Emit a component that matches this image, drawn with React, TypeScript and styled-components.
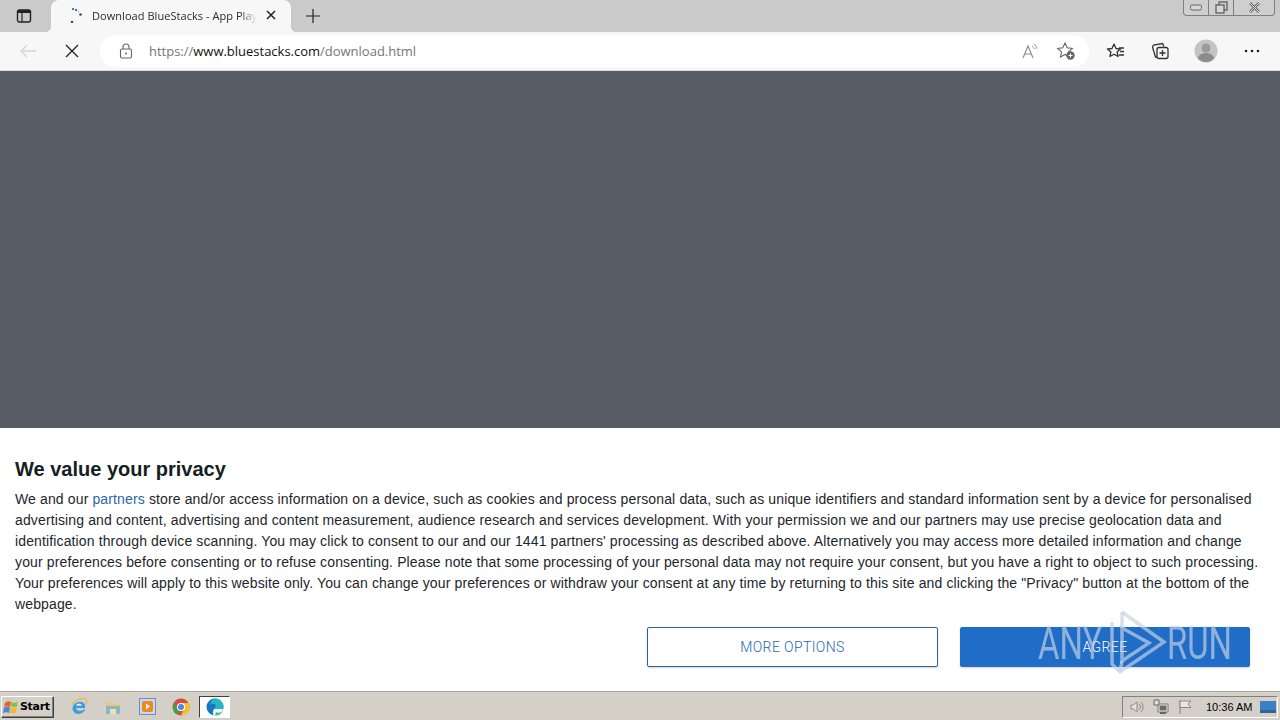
import React from "react";
import styled, { createGlobalStyle } from "styled-components";

const Global = createGlobalStyle`
  html, body { margin: 0; padding: 0; width: 1280px; height: 720px; overflow: hidden; background: #fff; }
  * { box-sizing: border-box; }
`;
const Screen = styled.div`
  position: relative; width: 1280px; height: 720px; display: flex; flex-direction: column;
  font-family: "Liberation Sans", Arial, sans-serif; overflow: hidden;
`;
const TabStrip = styled.div`
  height: 32px; flex: none; background: #cacaca; display: flex; align-items: flex-end; position: relative;
`;
const SideTabs = styled.div`
  width: 51px; height: 32px; display: flex; align-items: center; justify-content: center; padding-right: 3px;
`;
const Tab = styled.div`
  position: relative; width: 240px; height: 32px; background: #f7f7f7; border-radius: 8px 8px 0 0; display: flex; align-items: center;
  padding: 0 0 2px 18px; font-family: "Open Sans", sans-serif; font-size: 11px; color: #2b2b2b;
  &::before, &::after {
    content: ""; position: absolute; bottom: 0; width: 6px; height: 6px;
  }
  &::before { left: -6px; background: radial-gradient(circle at 0 0, transparent 6px, #f7f7f7 6.500px); }
  &::after { right: -6px; background: radial-gradient(circle at 100% 0, transparent 6px, #f7f7f7 6.500px); }
`;
const TabTitle = styled.span`
  margin-left: 9px; width: 165px; white-space: nowrap; overflow: hidden; flex: none; letter-spacing: 0.05px;
  -webkit-mask-image: linear-gradient(90deg, #000 90%, transparent);
  mask-image: linear-gradient(90deg, #000 90%, transparent);
`;
const NewTab = styled.div`
  width: 43px; height: 32px; display: flex; align-items: center; justify-content: center;
`;
const WindowControls = styled.div`
  position: absolute; top: 0; right: 5px; width: 92px; height: 16px; display: flex;
  border: 1px solid #7e7e7e; border-top: 0; border-radius: 0 0 4px 4px; background: #cfcfcf;
`;
const WinBtn = styled.div<{ $w: number; $last?: boolean }>`
  width: ${p => p.$w}px; height: 15px; display: flex; align-items: center; justify-content: center;
  border-right: ${p => (p.$last ? "none" : "1px solid #7e7e7e")};
`;
const Toolbar = styled.div`
  height: 38px; flex: none; background: #f7f7f7; display: flex; align-items: center;
`;
const NavBtn = styled.div<{ $w: number }>`
  width: ${p => p.$w}px; height: 32px; flex: none; display: flex; align-items: center; justify-content: center;
`;
const AddressBar = styled.div`
  margin-left: 12px; width: 989px; height: 32px; border-radius: 16px; background: #fff; display: flex; align-items: center;
  padding: 0 5px 0 19px; flex: none;
`;
const Url = styled.div`
  margin-left: 16px; flex: 1; font-family: "Open Sans", sans-serif; font-size: 13px; color: #767676; white-space: nowrap;
  letter-spacing: -0.01px;
  b { font-weight: 400; color: #111; }
`;
const AddrIcon = styled.div`
  width: 36px; height: 24px; display: flex; align-items: center; justify-content: center;
`;
const Tools = styled.div`
  display: flex; align-items: center; margin-left: 5px;
`;
const ToolBtn = styled.div<{ $w?: number }>`
  width: ${p => p.$w ?? 44}px; height: 32px; display: flex; align-items: center; justify-content: center;
`;
const Divider = styled.div`
  height: 1px; background: #dcdcdc; flex: none;
`;
const Page = styled.div`
  flex: 1; background: #595d66; min-height: 0;
`;
const Banner = styled.div`
  height: 263px; flex: none; background: #fff; padding: 29px 15px 0; display: flex; flex-direction: column;
`;
const Heading = styled.h2`
  margin: 0; font-size: 20px; line-height: 24px; font-weight: 700; color: #141e23;
`;
const Body = styled.p`
  margin: 8px 0 0; font-size: 14px; line-height: 21px; color: #1d262b; letter-spacing: 0.13px; width: 1250px;
  a { color: #2868a8; text-decoration: none; }
`;
const Actions = styled.div`
  display: flex; justify-content: flex-end; gap: 22px; margin-top: 12px; padding-right: 15px;
`;
const Button = styled.button<{ $primary?: boolean }>`
  width: ${p => (p.$primary ? 290 : 291)}px; height: 40px; border-radius: 2px; font-family: Roboto, "Liberation Sans", sans-serif;
  font-size: 14px; font-weight: 300; letter-spacing: 0.4px; cursor: pointer; padding: 0;
  border: 1px solid ${p => (p.$primary ? "#1f6dc6" : "#2a62a8")};
  background: ${p => (p.$primary ? "#1f6dc6" : "#fff")};
  color: ${p => (p.$primary ? "#fff" : "#1f65b8")};
  box-shadow: 0 1px 2px rgba(0,0,0,.18);
`;
const Rule = styled.div`
  height: 2px; flex: none; background: linear-gradient(#8c8a84, #efece4);
`;
const Taskbar = styled.div`
  height: 27px; flex: none; background: #d4d0c8; display: flex; align-items: center; padding-left: 1px;
`;
const Start = styled.div`
  width: 53px; height: 22px; display: flex; align-items: center; padding-left: 1px; background: #d4d0c8;
  border: 1px solid; border-color: #fff #404040 #404040 #fff; box-shadow: inset -1px -1px 0 #808080;
  font-size: 11px; font-weight: 700; color: #000; font-family: "DejaVu Sans", sans-serif; letter-spacing: -0.3px;
`;
const TaskIcons = styled.div`
  display: flex; align-items: center; margin-left: 14px; gap: 12px; height: 24px;
`;
const TaskIcon = styled.div<{ $active?: boolean }>`
  width: ${p => (p.$active ? 31 : 22)}px; height: 22px; display: flex; align-items: center; justify-content: center;
  ${p => p.$active ? "background:#fff; border:1px solid; border-color:#404040 #fff #fff #404040; margin-left:-5px;" : ""}
`;
const Tray = styled.div`
  margin-left: auto; margin-right: 2px; width: 156px; height: 22px; display: flex; align-items: center; padding-left: 2px;
  border: 1px solid; border-color: #808080 #fff #fff #808080;
`;
const TrayIcon = styled.div`
  width: 24px; display: flex; align-items: center; justify-content: center; height: 20px;
`;
const Clock = styled.span`
  font-size: 11px; color: #000; margin-left: 9px; white-space: nowrap; font-family: "Liberation Sans", sans-serif;
`;
const Watermark = styled.div`
  position: absolute; left: 1038px; top: 608px; width: 194px; height: 66px; display: flex; align-items: center;
  justify-content: space-between; color: rgba(196, 210, 228, .68); pointer-events: none;
`;
const WmText = styled.span`
  font-family: Roboto, sans-serif; font-weight: 400; font-size: 47px; line-height: 66px; display: inline-block;
  transform: scaleX(.7); padding-top: 3px;
  &:first-child { transform-origin: left center; }
  &:last-child { transform-origin: right center; }
`;
const WmMark = styled.svg`
  position: absolute; left: 70px; top: -2px;
`;

const stroke = { fill: "none", stroke: "#333", strokeWidth: 1.3 } as const;

export default function App() {
  return (
    <Screen>
      <Global />
      <TabStrip>
        <SideTabs>
          <svg width="16" height="16" viewBox="0 0 16 16"><rect x="1.500" y="2" width="13" height="12" rx="2" fill="none" stroke="#222" strokeWidth="1.400"/><rect x="2" y="2" width="12" height="3" fill="#222"/><path d="M6 5v9" stroke="#222" strokeWidth="1.200"/></svg>
        </SideTabs>
        <Tab>
          <svg width="14" height="16" viewBox="0 0 14 16"><g fill="#1d4f8f"><circle cx="4" cy="2" r="1"/><circle cx="7" cy="3" r="1.100"/><circle cx="11.500" cy="7.500" r="1.300"/><circle cx="3" cy="15" r="1.300"/></g><circle cx="9.500" cy="4.500" r=".8" fill="#8fb4dc"/></svg>
          <TabTitle>Download BlueStacks - App Player</TabTitle>
          <svg width="12" height="12" viewBox="0 0 12 12" style={{ marginLeft: 8 }}><path d="M2 2l8 8M10 2l-8 8" stroke="#222" strokeWidth="1.500"/></svg>
        </Tab>
        <NewTab>
          <svg width="16" height="16" viewBox="0 0 16 16"><path d="M8 1v14M1 8h14" stroke="#222" strokeWidth="1.200"/></svg>
        </NewTab>
        <WindowControls>
          <WinBtn $w={25}><svg width="12" height="7" viewBox="0 0 12 7"><rect x=".5" y="1" width="11" height="5" rx="1.500" fill="#d8d8d8" stroke="#666"/></svg></WinBtn>
          <WinBtn $w={25}><svg width="13" height="13" viewBox="0 0 13 13"><rect x="4" y="1" width="8" height="8" fill="none" stroke="#666" strokeWidth="1.400"/><rect x="1" y="4" width="8" height="8" fill="#d8d8d8" stroke="#666" strokeWidth="1.400"/></svg></WinBtn>
          <WinBtn $w={40} $last><svg width="13" height="11" viewBox="0 0 13 11"><path d="M2 1l9 9M11 1l-9 9" stroke="#666" strokeWidth="2.600"/><path d="M2 1l9 9M11 1l-9 9" stroke="#e4e4e4" strokeWidth="1"/></svg></WinBtn>
        </WindowControls>
      </TabStrip>
      <Toolbar>
        <NavBtn $w={56}>
          <svg width="18" height="14" viewBox="0 0 18 14"><path d="M17 7H2M8 1L2 7l6 6" fill="none" stroke="#d4d4d4" strokeWidth="1.300"/></svg>
        </NavBtn>
        <NavBtn $w={32}>
          <svg width="14" height="14" viewBox="0 0 14 14"><path d="M1 1l12 12M13 1L1 13" stroke="#222" strokeWidth="1.300"/></svg>
        </NavBtn>
        <AddressBar>
          <svg width="14" height="16" viewBox="0 0 14 16"><rect x="1.500" y="6" width="11" height="9" rx="1.500" fill="none" stroke="#666" strokeWidth="1.100"/><path d="M4 6V4a3 3 0 0 1 6 0v2" fill="none" stroke="#666" strokeWidth="1.100"/><circle cx="7" cy="10.500" r="1" fill="#666"/></svg>
          <Url>https://<b>www.bluestacks.com</b>/download.html</Url>
          <AddrIcon>
            <svg width="18" height="18" viewBox="0 0 18 18"><path d="M2 16L7 4l5 12M3.800 12h6.400" fill="none" stroke="#8a8a8a" strokeWidth="1.100"/><path d="M11 4a4 4 0 0 1 2.500 3M12.500 1.800a6.500 6.500 0 0 1 3.500 5" fill="none" stroke="#999" strokeWidth="1"/></svg>
          </AddrIcon>
          <AddrIcon>
            <svg width="20" height="20" viewBox="0 0 20 20"><path d="M9 2l2.200 4.800 5.200.6-3.900 3.500 1 5.100L9 13.500l-4.500 2.500 1-5.100L1.600 7.400l5.200-.6z" fill="none" stroke="#666" strokeWidth="1.100"/><circle cx="14.500" cy="14.500" r="4.200" fill="#666"/><path d="M14.500 12.500v4M12.500 14.500h4" stroke="#fff" strokeWidth="1"/></svg>
          </AddrIcon>
        </AddressBar>
        <Tools>
          <ToolBtn>
            <svg width="20" height="18" viewBox="0 0 20 18"><path d="M8 2l2 4.500 4.500.5-3.400 3 1 4.500L8 12.200 3.900 14.500l1-4.500L1.500 7 6 6.500z" {...stroke} strokeLinejoin="round"/><path d="M13 6h5M14 9.500h4M13 13h5" {...stroke}/></svg>
          </ToolBtn>
          <ToolBtn>
            <svg width="18" height="18" viewBox="0 0 18 18"><path d="M6 15H4.500L1.500 5l1-2 9-1.500 1.500 3" {...stroke}/><rect x="6" y="5.500" width="11" height="11" rx="2" {...stroke} fill="#f7f7f7"/><path d="M11.500 8v6M8.500 11h6" {...stroke}/></svg>
          </ToolBtn>
          <ToolBtn $w={48}>
            <svg width="24" height="24" viewBox="0 0 24 24"><circle cx="12" cy="12" r="11.500" fill="#c4c4c4"/><circle cx="12" cy="9" r="4.500" fill="#9a9a9a"/><path d="M4 19c1-4 5-5 8-5s7 1 8 5c-2 3-5 4-8 4s-6-1-8-4z" fill="#8c8c8c"/></svg>
          </ToolBtn>
          <ToolBtn>
            <svg width="16" height="4" viewBox="0 0 16 4"><circle cx="2" cy="2" r="1.300" fill="#222"/><circle cx="8" cy="2" r="1.300" fill="#222"/><circle cx="14" cy="2" r="1.300" fill="#222"/></svg>
          </ToolBtn>
        </Tools>
      </Toolbar>
      <Divider />
      <Page />
      <Banner>
        <Heading>We value your privacy</Heading>
        <Body>
          We and our <a href="#p">partners</a> store and/or access information on a device, such as cookies and process personal data, such as unique identifiers and standard information sent by a device for personalised advertising and content, advertising and content measurement, audience research and services development. With your permission we and our partners may use precise geolocation data and identification through device scanning. You may click to consent to our and our 1441 partners' processing as described above. Alternatively you may access more detailed information and change your preferences before consenting or to refuse consenting. Please note that some processing of your personal data may not require your consent, but you have a right to object to such processing. Your preferences will apply to this website only. You can change your preferences or withdraw your consent at any time by returning to this site and clicking the "Privacy" button at the bottom of the webpage.
        </Body>
        <Actions>
          <Button>MORE OPTIONS</Button>
          <Button $primary>AGREE</Button>
        </Actions>
      </Banner>
      <Rule />
      <Taskbar>
        <Start>
          <svg width="17" height="16" viewBox="0 0 17 16" style={{ flex: "none" }}><path d="M2 4c2-2 4-2 6-1L7 8C5 7 3 7 1 8z" fill="#e8622a"/><path d="M8.500 3c2 1 4 1 6-.5L14 7.500c-2 1-4 1-6 0z" fill="#8cc04a"/><path d="M1 8.500c2-1 4-1 6 0L6 14c-2-1-4-1-6 0z" fill="#4a86d8"/><path d="M7.500 8.500c2 1 4 1 6 0L13 13.500c-2 1-5 1-6.500 0z" fill="#f5b82e"/></svg>
          Start
        </Start>
        <TaskIcons>
          <TaskIcon>
            <svg width="18" height="18" viewBox="0 0 18 18"><path d="M15 10H6c.5 3 5 4 8 1.500l1-.5c0 4-8 7-11 3C1 11 3 6 7 4.500 10 3 14 4 15 7z" fill="#3d9be0"/><path d="M6 7.500c1-2.500 5-2.500 6 0z" fill="#fff"/><path d="M2 7C4 3 11-1 16 1.500c1 1 1 3 0 5" fill="none" stroke="#e6b93c" strokeWidth="1.200"/></svg>
          </TaskIcon>
          <TaskIcon>
            <svg width="16" height="16" viewBox="0 0 16 16"><path d="M1 3h5l1 1.500h8V15H1z" fill="#e9c877"/><rect x="1" y="7" width="14" height="8" fill="#8ab6c9"/><rect x="5" y="10" width="6" height="5" fill="#f1e3b0"/></svg>
          </TaskIcon>
          <TaskIcon>
            <svg width="17" height="17" viewBox="0 0 17 17"><rect x=".5" y=".5" width="16" height="16" fill="#c9d8ee" stroke="#6a8fc7"/><rect x="3" y="3" width="11" height="11" rx="2" fill="#f08a1d"/><path d="M7 5.500l4 3-4 3z" fill="#fff"/></svg>
          </TaskIcon>
          <TaskIcon>
            <svg width="18" height="18" viewBox="0 0 18 18"><circle cx="9" cy="9" r="8.500" fill="#d94a3c"/><path d="M9 9l-3.600 7.700A8.500 8.500 0 0 1 .9 11.500L2 4l4 7z" fill="#3fa34d"/><path d="M9 5h7.800a8.500 8.500 0 0 1-8 12.500L12 11z" fill="#f0c32e"/><circle cx="9" cy="9" r="4" fill="#fff"/><circle cx="9" cy="9" r="3" fill="#4a88e0"/></svg>
          </TaskIcon>
          <TaskIcon $active>
            <svg width="18" height="18" viewBox="0 0 18 18"><circle cx="9" cy="9" r="8.500" fill="#1578c4"/><path d="M9 .5a8.500 8.500 0 0 1 8.500 8.500c0 1-.5 2-2 2H9c-1 0-1-1 0-1.500 1.500-1 1-3-1-3.500-1.500-.5-3 0-4 1C5 3 7 .5 9 .5z" fill="#27b6c6"/><path d="M8 11h9c-1 4-5 7-8 6.500-2-.5-3-3-1-6.500z" fill="#fff"/><path d="M10 14c2 1 4.500 1 6.500-1-1 2.500-3.500 4.500-6 4.500-1.500 0-1.500-2.500-.5-3.500z" fill="#2fc5a5"/></svg>
          </TaskIcon>
        </TaskIcons>
        <Tray>
          <TrayIcon>
            <svg width="16" height="16" viewBox="0 0 16 16"><path d="M2 6h2.500L8 3v10L4.500 10H2z" fill="#e6e3da" stroke="#8a8a84"/><path d="M10 5a4 4 0 0 1 0 6M12 3a7 7 0 0 1 0 10" fill="none" stroke="#8a8a84"/></svg>
          </TrayIcon>
          <TrayIcon>
            <svg width="16" height="16" viewBox="0 0 16 16"><rect x="5" y="5" width="10" height="8" fill="#efeee8" stroke="#777"/><rect x="6.500" y="6.500" width="7" height="5" fill="#6b6b6b"/><path d="M1 1h5v5H1z" fill="#ddd" stroke="#666"/><path d="M7 14h6" stroke="#666" strokeWidth="2"/></svg>
          </TrayIcon>
          <TrayIcon>
            <svg width="16" height="16" viewBox="0 0 16 16"><path d="M3 1v14" stroke="#8a8a84" strokeWidth="1.200"/><path d="M3 2h11l-3 3 3 3.500H3z" fill="#e8e6de" stroke="#8a8a84"/></svg>
          </TrayIcon>
          <Clock>10:36 AM</Clock>
          <svg width="16" height="12" viewBox="0 0 16 12" style={{ marginLeft: 8, flex: "none" }}><rect width="16" height="12" fill="#3b7fc9"/><rect y="9" width="16" height="3" fill="#33658f"/></svg>
        </Tray>
      </Taskbar>
      <Watermark>
        <WmText>ANY</WmText>
        <WmMark width="60" height="70" viewBox="0 0 60 70" fill="none" stroke="currentColor" strokeWidth="3.500" strokeLinejoin="miter">
          <path d="M14 6L56 36 12 66 4 58V16" />
          <path d="M14 22L41 37 14 55z" />
          <path d="M14 6L14 22M12 66L14 55" />
        </WmMark>
        <WmText>RUN</WmText>
      </Watermark>
    </Screen>
  );
}
